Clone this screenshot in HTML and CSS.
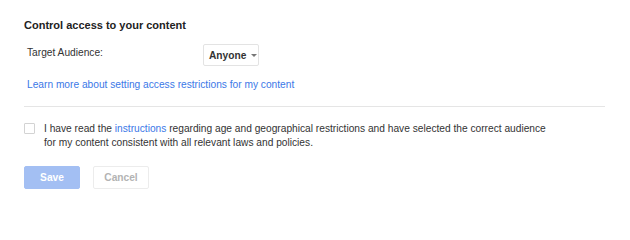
FILE: index.html
```html
<!DOCTYPE html>
<html>
<head>
<meta charset="utf-8">
<link rel="stylesheet" href="styles.css">
</head>
<body>
<div class="panel">
  <h2 class="title">Control access to your content</h2>
  <div class="field-row">
    <div class="field-label">Target Audience:</div>
    <div class="dropdown"><span class="dropdown-text">Anyone</span><span class="caret"></span></div>
  </div>
  <a class="learn-link" href="#">Learn more about setting access restrictions for my content</a>
  <div class="divider"></div>
  <label class="agree">
    <span class="checkbox"></span>
    <span class="agree-text">I have read the <a class="inline-link" href="#">instructions</a> regarding age and geographical restrictions and have selected the correct audience for my content consistent with all relevant laws and policies.</span>
  </label>
  <div class="actions">
    <button class="btn btn-save">Save</button>
    <button class="btn btn-cancel">Cancel</button>
  </div>
</div>
</body>
</html>
```

FILE: styles.css
```css
html, body {
  margin: 0;
  padding: 0;
  background: #fff;
}
body {
  font-family: "Liberation Sans", Arial, sans-serif;
  font-size: 10.2px;
  color: #333;
}
.panel {
  padding: 19px 0 0 24px;
  width: 582px;
}
.title {
  margin: 0;
  font-size: 11px;
  line-height: 13px;
  font-weight: bold;
  color: #222;
}
.field-row {
  display: flex;
  align-items: flex-start;
  margin-top: 12px;
  padding-left: 3px;
}
.field-label {
  width: 176px;
  line-height: 13px;
  padding-top: 2px;
}
.dropdown {
  display: flex;
  align-items: center;
  box-sizing: border-box;
  width: 56px;
  height: 22px;
  border: 1px solid #e3e3e3;
  border-radius: 2px;
  padding: 0 0 0 5px;
  background: #fff;
}
.dropdown-text {
  font-weight: bold;
  color: #333;
  line-height: 13px;
  padding-top: 1px;
}
.caret {
  margin-left: 5px;
  margin-top: 1px;
  width: 0;
  height: 0;
  border-left: 3.5px solid transparent;
  border-right: 3.5px solid transparent;
  border-top: 3.5px solid #777;
}
.learn-link {
  display: block;
  margin-top: 12px;
  padding-left: 3px;
  line-height: 13px;
  color: #3b78e7;
  text-decoration: none;
}
.divider {
  margin-top: 15px;
  height: 1px;
  background: #e5e5e5;
  width: 581px;
}
.agree {
  display: flex;
  align-items: flex-start;
  margin-top: 15px;
}
.checkbox {
  flex: none;
  box-sizing: border-box;
  width: 11px;
  height: 11px;
  border: 1px solid #d3d3d3;
  border-radius: 1px;
  margin-top: 1px;
}
.agree-text {
  margin-left: 9px;
  width: 506px;
  line-height: 14px;
}
.inline-link {
  color: #3b78e7;
  text-decoration: none;
}
.actions {
  display: flex;
  gap: 13px;
  margin-top: 16px;
}
.btn {
  box-sizing: border-box;
  width: 56px;
  height: 23px;
  font-family: "Liberation Sans", Arial, sans-serif;
  font-size: 10.2px;
  font-weight: bold;
  border-radius: 2px;
  padding: 0;
}
.btn-save {
  background: #a3bff3;
  border: 1px solid #a3bff3;
  color: #fff;
}
.btn-cancel {
  background: #fff;
  border: 1px solid #ececec;
  color: #b3b3b3;
}
```
